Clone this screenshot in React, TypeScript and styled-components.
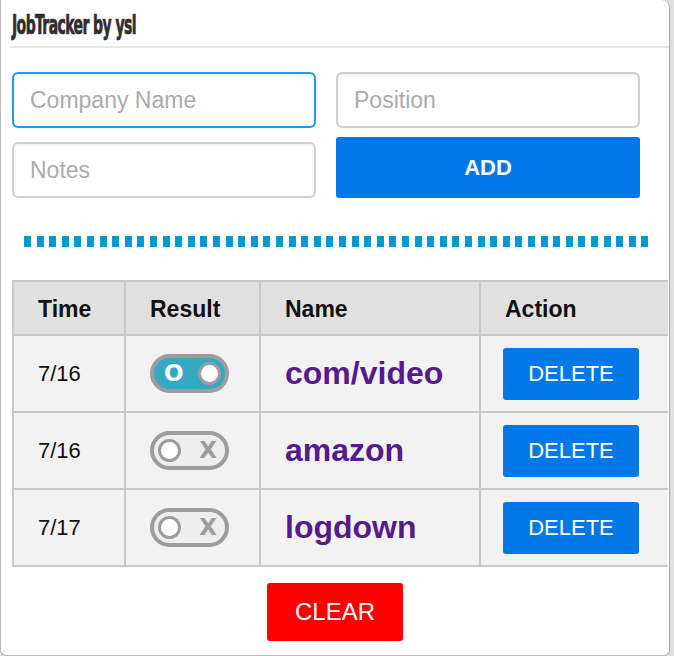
import React from 'react';
import styled, { createGlobalStyle, css } from 'styled-components';

const GlobalStyle = createGlobalStyle`
  * {
    box-sizing: border-box;
  }

  body {
    margin: 0;
    background: #dedede;
    font-family: "Liberation Sans", Arial, sans-serif;
  }
`;

const Popup = styled.main`
  width: 670px;
  height: 656px;
  background: #ffffff;
  border-left: 1px solid #b8b8b8;
  border-right: 1px solid #a8a8a8;
  border-bottom: 1px solid #b8b8b8;
  border-radius: 0 8px 6px 6px;
  overflow: hidden;
`;

const Header = styled.header`
  padding: 10px 0 0 9px;
`;

const Title = styled.h1`
  display: inline-block;
  margin: 0 0 0 2px;
  height: 30px;
  font-family: "DejaVu Sans Condensed", "DejaVu Sans", sans-serif;
  font-weight: bold;
  font-size: 26px;
  line-height: 30px;
  letter-spacing: -1px;
  color: #2e2e2e;
  -webkit-text-stroke: 0.7px #2e2e2e;
  transform: scaleX(0.6);
  transform-origin: left center;
  white-space: nowrap;
`;

const Divider = styled.hr`
  margin: 6px 0 0 0;
  height: 2px;
  border: none;
  background: #e6e6e6;
`;

const Form = styled.section`
  display: grid;
  grid-template-columns: 304px 304px;
  grid-template-rows: 56px 61px;
  column-gap: 20px;
  row-gap: 9px;
  padding: 24px 0 0 11px;
`;

const Field = styled.input<{ $focused?: boolean }>`
  width: 304px;
  height: 56px;
  padding: 0 16px;
  align-self: end;
  border: 2px solid #d0d0d0;
  border-radius: 6px;
  background: #ffffff;
  box-shadow: inset 0 1px 3px rgba(0, 0, 0, 0.08);
  font-family: "Liberation Sans", Arial, sans-serif;
  font-size: 23px;
  color: #333333;
  caret-color: #000000;
  outline: none;

  &::placeholder {
    color: #ababab;
  }

  ${(p) =>
    p.$focused &&
    css`
      border-color: #1d9ce5;
    `}
`;

const BlueButton = styled.button<{ $bold?: boolean }>`
  border: none;
  border-radius: 3px;
  background: #0078e7;
  color: #ffffff;
  font-family: "Liberation Sans", Arial, sans-serif;
  font-size: 22px;
  font-weight: ${(p) => (p.$bold ? 'bold' : 'normal')};
  cursor: pointer;
`;

const AddButton = styled(BlueButton)`
  width: 304px;
  height: 61px;
`;

const Dashes = styled.div`
  width: 624px;
  height: 11px;
  margin: 38px 0 0 23px;
  background: repeating-linear-gradient(
    to right,
    #0398cf 0,
    #0398cf 7px,
    transparent 7px,
    transparent 12.6px
  );
`;

const Table = styled.table`
  margin: 33px 0 0 11px;
  width: 656px;
  border-spacing: 0;
  table-layout: fixed;
  border-left: 2px solid #c8c8c8;
  border-top: 2px solid #c8c8c8;
`;

const HeadCell = styled.th<{ $w: number; $last?: boolean }>`
  width: ${(p) => p.$w}px;
  height: 54px;
  padding: 2px 0 0 24px;
  text-align: left;
  background: #e0e0e0;
  border-bottom: 2px solid #c8c8c8;
  border-right: ${(p) => (p.$last ? 'none' : '2px solid #c8c8c8')};
  font-size: 23px;
  font-weight: bold;
  color: #111111;
`;

const Cell = styled.td<{ $last?: boolean; $pad?: number }>`
  height: 77px;
  padding: 0 0 0 ${(p) => p.$pad ?? 24}px;
  background: #f2f2f2;
  border-bottom: 2px solid #c8c8c8;
  border-right: ${(p) => (p.$last ? 'none' : '2px solid #c8c8c8')};
  font-size: 22px;
  color: #111111;
  vertical-align: middle;
`;

const Toggle = styled.span<{ $on: boolean }>`
  display: flex;
  align-items: center;
  flex-direction: ${(p) => (p.$on ? 'row' : 'row-reverse')};
  justify-content: space-between;
  width: 79px;
  height: 39px;
  padding-left: ${(p) => (p.$on ? 10 : 4)}px;
  padding-right: ${(p) => (p.$on ? 4 : 8)}px;
  border: 4px solid #9d9d9d;
  border-radius: 20px;
  background: ${(p) => (p.$on ? '#35a8c4' : '#eeeeee')};
`;

const ToggleMark = styled.span<{ $on: boolean }>`
  font-family: "DejaVu Sans", sans-serif;
  font-weight: bold;
  font-size: 23px;
  line-height: 1;
  color: ${(p) => (p.$on ? '#ffffff' : '#9d9d9d')};
`;

const Knob = styled.span`
  width: 23px;
  height: 23px;
  border: 3px solid #9d9d9d;
  border-radius: 50%;
  background: #ffffff;
`;

const NameLink = styled.a`
  font-size: 32px;
  font-weight: bold;
  color: #551a8b;
  text-decoration: none;
`;

const DeleteButton = styled(BlueButton)`
  width: 136px;
  height: 52px;
  margin-left: -1px;
`;

const Footer = styled.footer`
  display: flex;
  justify-content: center;
  padding-top: 16px;
`;

const ClearButton = styled.button`
  width: 136px;
  height: 58px;
  border: none;
  border-radius: 3px;
  background: #ff0000;
  color: #ffffff;
  font-family: "Liberation Sans", Arial, sans-serif;
  font-size: 24px;
  cursor: pointer;
`;

const jobs = [
  { time: '7/16', on: true, name: 'com/video' },
  { time: '7/16', on: false, name: 'amazon' },
  { time: '7/17', on: false, name: 'logdown' },
];

export default function App() {
  return (
    <>
      <GlobalStyle />
      <Popup>
        <Header>
          <Title>JobTracker by ysl</Title>
          <Divider />
        </Header>
        <Form>
          <Field $focused autoFocus placeholder="Company Name" />
          <Field placeholder="Position" />
          <Field placeholder="Notes" />
          <AddButton $bold>ADD</AddButton>
        </Form>
        <Dashes />
        <Table>
          <thead>
            <tr>
              <HeadCell $w={112}>Time</HeadCell>
              <HeadCell $w={135}>Result</HeadCell>
              <HeadCell $w={220}>Name</HeadCell>
              <HeadCell $w={187} $last>
                Action
              </HeadCell>
            </tr>
          </thead>
          <tbody>
            {jobs.map((job, i) => (
              <tr key={i}>
                <Cell>{job.time}</Cell>
                <Cell>
                  <Toggle $on={job.on}>
                    <ToggleMark $on={job.on}>{job.on ? 'O' : 'X'}</ToggleMark>
                    <Knob />
                  </Toggle>
                </Cell>
                <Cell>
                  <NameLink href="#">{job.name}</NameLink>
                </Cell>
                <Cell $last $pad={23}>
                  <DeleteButton>DELETE</DeleteButton>
                </Cell>
              </tr>
            ))}
          </tbody>
        </Table>
        <Footer>
          <ClearButton>CLEAR</ClearButton>
        </Footer>
      </Popup>
    </>
  );
}
